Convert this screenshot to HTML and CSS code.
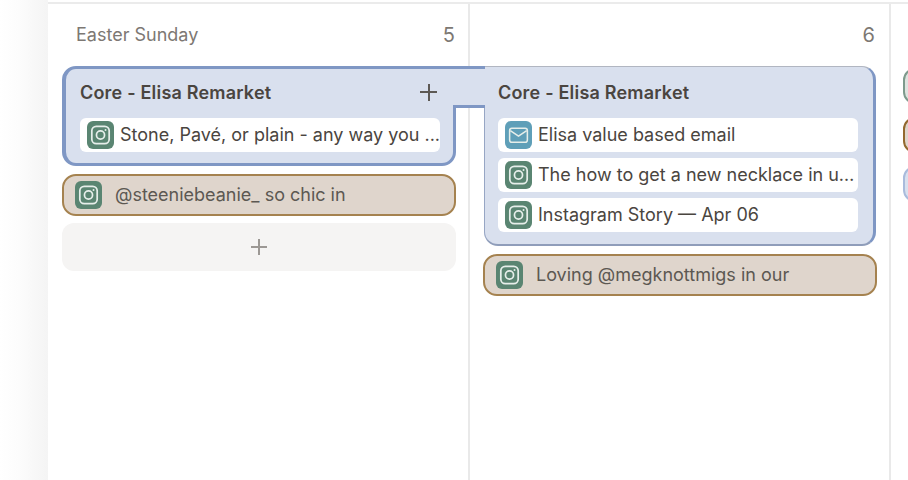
FILE: index.html
```html
<!DOCTYPE html>
<html lang="en">
<head>
<meta charset="utf-8">
<title>Calendar</title>
<link rel="stylesheet" href="styles.css">
</head>
<body>
<svg class="defs" width="0" height="0" aria-hidden="true">
  <symbol id="ig" viewBox="0 0 28 28">
    <rect x="5" y="5" width="18" height="18" rx="4.6" fill="none" stroke="currentColor" stroke-width="1.8"/>
    <circle cx="14" cy="14" r="4.2" fill="none" stroke="currentColor" stroke-width="1.8"/>
    <circle cx="19.2" cy="8.8" r="1" fill="currentColor"/>
  </symbol>
  <symbol id="mail" viewBox="0 0 28 28">
    <rect x="4.8" y="7" width="18.4" height="14.6" rx="2.4" fill="none" stroke="currentColor" stroke-width="1.6"/>
    <path d="M5.5 9.5 L14 15.2 L22.5 9.5" fill="none" stroke="currentColor" stroke-width="1.6"/>
  </symbol>
</svg>
<div class="page">
  <div class="gutter"></div>
  <main class="calendar">
    <section class="day day-first">
      <header class="day-head"><span class="holiday">Easter Sunday</span><span class="num">5</span></header>
      <div class="stack">
        <article class="group group-start">
          <div class="group-title"><span>Core - Elisa Remarket</span><span class="plus-dark"></span></div>
          <div class="item"><svg class="icon ig"><use href="#ig"/></svg><span class="label">Stone, Pavé, or plain - any way you ...</span></div>
        </article>
        <div class="chip"><svg class="icon ig"><use href="#ig"/></svg><span class="chip-label">@steeniebeanie_ so chic in</span></div>
        <div class="add"><span class="plus-light"></span></div>
      </div>
    </section>
    <section class="day day-second">
      <header class="day-head"><span class="holiday"></span><span class="num">6</span></header>
      <div class="stack">
        <article class="group group-end">
          <div class="group-title"><span>Core - Elisa Remarket</span></div>
          <div class="item"><svg class="icon mail"><use href="#mail"/></svg><span class="label">Elisa value based email</span></div>
          <div class="item"><svg class="icon ig"><use href="#ig"/></svg><span class="label">The how to get a new necklace in u…</span></div>
          <div class="item"><svg class="icon ig"><use href="#ig"/></svg><span class="label">Instagram Story — Apr 06</span></div>
        </article>
        <div class="chip chip-wide"><svg class="icon ig"><use href="#ig"/></svg><span class="chip-label">Loving @megknottmigs in our</span></div>
      </div>
    </section>
    <section class="day-third">
      <div class="peek peek-green"></div>
      <div class="peek peek-brown"></div>
      <div class="peek peek-blue"></div>
    </section>
  </main>
</div>
</body>
</html>
```
FILE: styles.css
```css
* { box-sizing: border-box; }
html, body { margin: 0; height: 100%; }
body {
  width: 908px;
  height: 480px;
  overflow: hidden;
  background: #fff;
  font-family: Inter, "Liberation Sans", sans-serif;
  color: #4a4540;
}
.defs { position: absolute; }
.page { display: flex; height: 480px; }
.gutter {
  flex: 0 0 48px;
  background: linear-gradient(90deg, #fff 0%, #fcfcfc 40%, #f4f4f4 100%);
}
.calendar {
  flex: 1;
  display: flex;
  margin-top: 2px;
  border-top: 2px solid #ebebeb;
  overflow: hidden;
}
.day { flex: 0 0 auto; border-right: 2px solid #e9e9e9; }
.day-first { width: 422px; padding: 0 12px 0 14px; }
.day-second { width: 421px; padding: 0 13px 0 14px; }
.day-head {
  display: flex;
  justify-content: space-between;
  align-items: center;
  height: 62px;
  padding: 0 1px 2px 14px;
}
.holiday { font-size: 18px; color: #7d7873; }
.num { margin-top: 1px; font-size: 20px; color: #7d7873; }
.stack { display: flex; flex-direction: column; gap: 8px; }
.group {
  display: flex;
  flex-direction: column;
  gap: 6px;
  background: #d9e0ee;
}
.group-start {
  position: relative;
  height: 100px;
  padding: 11px 13px 0 14px;
  border: 3px solid #7f97c4;
  border-left-width: 4px;
  border-radius: 14px 0 14px 14px;
}
.group-start::after {
  content: "";
  position: absolute;
  left: 100%;
  top: -3px;
  width: 32px;
  height: 36px;
  background: #d9e0ee;
  border-top: 3px solid #7f97c4;
  border-bottom: 3px solid #7f97c4;
}
.group-end {
  height: 180px;
  padding: 13px 15px 0 13px;
  border-style: solid;
  border-color: #b1b6c1 #7f97c4 #8f9dba #97a6c4;
  border-width: 1px 3px 2px 1px;
  border-radius: 0 14px 14px 14px;
}
.group-title {
  display: flex;
  justify-content: space-between;
  align-items: center;
  height: 24px;
  margin-bottom: 8px;
  font-size: 18px;
  font-weight: 600;
  letter-spacing: 0.2px;
}
.group-title span:first-child { white-space: nowrap; }
.plus-dark, .plus-light { position: relative; display: block; }
.plus-dark { width: 17px; height: 17px; margin-right: 3px; color: #5d5954; }
.plus-light { width: 16px; height: 16px; color: #9c9894; }
.plus-dark::before, .plus-dark::after, .plus-light::before, .plus-light::after {
  content: "";
  position: absolute;
  background: currentColor;
}
.plus-dark::before, .plus-light::before { left: 0; right: 0; top: 50%; height: 2px; margin-top: -1px; }
.plus-dark::after, .plus-light::after { top: 0; bottom: 0; left: 50%; width: 2px; margin-left: -1px; }
.item {
  display: flex;
  align-items: center;
  gap: 6px;
  height: 34px;
  padding: 0 0 0 7px;
  background: #fff;
  border-radius: 6px;
  font-size: 18px;
}
.label { flex: 1; min-width: 0; padding-bottom: 1px; white-space: nowrap; }
.icon { flex: 0 0 27px; width: 27px; height: 28px; border-radius: 6px; color: #e6eeea; }
.ig { background: #5a8572; }
.mail { background: #5f9fb8; }
.chip {
  display: flex;
  align-items: center;
  gap: 13px;
  height: 42px;
  padding: 0 11px;
  background: #dfd5cc;
  border: 2px solid #a5824f;
  border-radius: 14px;
  font-size: 18px;
  color: #5c5852;
}
.chip-label { padding-bottom: 2px; }
.chip-wide { margin: 0 -1px; }
.add {
  display: flex;
  align-items: center;
  justify-content: center;
  height: 48px;
  margin-top: -1px;
  background: #f5f4f3;
  border-radius: 12px;
}
.day-third { flex: 1 0 auto; display: flex; flex-direction: column; padding: 64px 0 0 12px; gap: 13px; }
.peek { width: 60px; height: 36px; border-radius: 12px; border: 2px solid; }
.peek-green { background: #dfe3df; border-color: #7d9a8c; }
.peek-brown { background: #dfd5cc; border-color: #93692f; }
.peek-blue { background: #d9e0ee; border-color: #a9bbdc; }
```
